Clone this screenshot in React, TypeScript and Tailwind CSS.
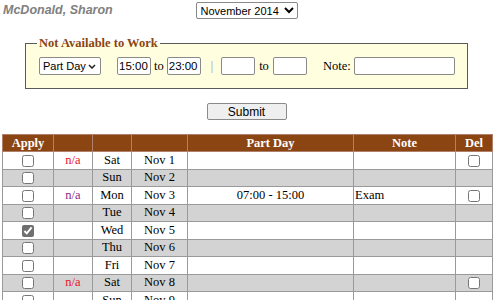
import { useState } from 'react';

type Row = {
  na?: 'red' | 'purple';
  day: string;
  date: string;
  part?: string;
  note?: string;
  del?: boolean;
  checked?: boolean;
};

const rows: Row[] = [
  { na: 'red', day: 'Sat', date: 'Nov 1', del: true },
  { day: 'Sun', date: 'Nov 2' },
  { na: 'purple', day: 'Mon', date: 'Nov 3', part: '07:00 - 15:00', note: 'Exam', del: true },
  { day: 'Tue', date: 'Nov 4' },
  { day: 'Wed', date: 'Nov 5', checked: true },
  { day: 'Thu', date: 'Nov 6' },
  { day: 'Fri', date: 'Nov 7' },
  { na: 'red', day: 'Sat', date: 'Nov 8', del: true },
  { day: 'Sun', date: 'Nov 9' },
];

const inputCls =
  "h-[18px] border border-[#8a8a8a] rounded-[2px] bg-white px-[1px] text-[11.5px] text-black font-['Liberation_Sans',Arial,sans-serif] outline-none";

const cell = 'border border-[#9a9a9a] p-0 leading-[15px]';

function Check({ on }: { on?: boolean }) {
  return (
    <input
      type="checkbox"
      defaultChecked={on}
      className="m-0 w-[12px] h-[12px] align-middle accent-[#707070]"
    />
  );
}

function Chevron() {
  return (
    <svg width="8" height="5" viewBox="0 0 8 5" className="shrink-0">
      <path d="M1 1l3 3 3-3" fill="none" stroke="#222" strokeWidth="1.5" />
    </svg>
  );
}

export default function App() {
  const [month, setMonth] = useState('2014-11');

  return (
    <div className="w-[493px] h-[300px] overflow-hidden bg-white text-black font-['Liberation_Serif','Times_New_Roman',serif] text-[13px]">
      {/* header line: name + month picker */}
      <div className="grid grid-cols-[1fr_auto_1fr] items-center h-[20px] pt-[1px]">
        <div className="pl-[3px] font-['Liberation_Sans',Arial,sans-serif] font-bold italic text-[12.5px] text-[#808080]">
          McDonald, Sharon
        </div>
        <select
          value={month}
          onChange={(e) => setMonth(e.target.value)}
          className="w-[102px] h-[17px] border border-[#8a8a8a] rounded-[2px] bg-white text-[11px] font-['Liberation_Sans',Arial,sans-serif] pl-0"
        >
          <option value="2014-10">October 2014</option>
          <option value="2014-11">November 2014</option>
          <option value="2014-12">December 2014</option>
        </select>
        <div />
      </div>

      <fieldset className="mx-[25px] mt-[16px] border border-[#5a5a5a] bg-[#ffffe0] pl-[13px] pr-[8px] pt-[7px] pb-[13px]">
        <legend className="px-[2px] ml-[-2px] font-bold text-[12.5px] text-[#8b4513] leading-[14px]">
          Not Available to Work
        </legend>
        <div className="flex items-center h-[18px]">
          <label className="w-[62px] h-[18px] flex items-center justify-between pl-[3px] pr-[4px] border border-[#8a8a8a] rounded-[2px] bg-white">
            <select className="appearance-none bg-transparent outline-none text-[11px] font-['Liberation_Sans',Arial,sans-serif] p-0 w-[44px]">
              <option>Part Day</option>
              <option>Full Day</option>
            </select>
            <Chevron />
          </label>
          <input className={`${inputCls} w-[34px] ml-[16px]`} defaultValue="15:00" />
          <span className="mx-[3px] text-[12.5px]">to</span>
          <input className={`${inputCls} w-[34px]`} defaultValue="23:00" />
          <span className="ml-[10px] text-[#999] text-[12px]">|</span>
          <input className={`${inputCls} w-[34px] ml-[8px]`} />
          <span className="mx-[4px] text-[12.5px]">to</span>
          <input className={`${inputCls} w-[34px]`} />
          <span className="ml-[16px] mr-[3px] text-[12.5px]">Note:</span>
          <input className={`${inputCls} w-[101px]`} />
        </div>
      </fieldset>

      <div className="flex justify-center mt-[14px]">
        <button className="w-[80px] h-[17px] border border-[#8a8a8a] rounded-[2px] bg-[#efefef] text-[12px] leading-none font-['Liberation_Sans',Arial,sans-serif]">
          Submit
        </button>
      </div>

      <table className="ml-[2px] mt-[14px] w-[490px] border-collapse table-fixed text-[12.5px]">
        <colgroup>
          <col className="w-[51px]" />
          <col className="w-[39px]" />
          <col className="w-[39px]" />
          <col className="w-[56px]" />
          <col className="w-[166px]" />
          <col className="w-[102px]" />
          <col className="w-[37px]" />
        </colgroup>
        <thead>
          <tr className="bg-[#8b4513] text-white h-[17px]">
            <th className="border border-[#b0806a] p-0 leading-[15px] font-bold">Apply</th>
            <th className="border border-[#b0806a] p-0" />
            <th className="border border-[#b0806a] p-0" />
            <th className="border border-[#b0806a] p-0" />
            <th className="border border-[#b0806a] p-0 leading-[15px] font-bold">Part Day</th>
            <th className="border border-[#b0806a] p-0 leading-[15px] font-bold">Note</th>
            <th className="border border-[#b0806a] p-0 leading-[15px] font-bold">Del</th>
          </tr>
        </thead>
        <tbody>
          {rows.map((r, i) => (
            <tr key={r.date} className={`h-[17.5px] ${i % 2 ? 'bg-[#d3d3d3]' : 'bg-white'}`}>
              <td className={`${cell} text-center`}>
                <Check on={r.checked} />
              </td>
              <td
                className={`${cell} text-center ${
                  r.na === 'red' ? 'text-[#e8102a]' : 'text-[#8a1f8a]'
                }`}
              >
                {r.na ? 'n/a' : ''}
              </td>
              <td className={`${cell} text-center`}>{r.day}</td>
              <td className={`${cell} text-center`}>{r.date}</td>
              <td className={`${cell} text-center`}>{r.part}</td>
              <td className={`${cell} pl-[1px] text-left`}>{r.note}</td>
              <td className={`${cell} text-center`}>{r.del && <Check />}</td>
            </tr>
          ))}
        </tbody>
      </table>
    </div>
  );
}
